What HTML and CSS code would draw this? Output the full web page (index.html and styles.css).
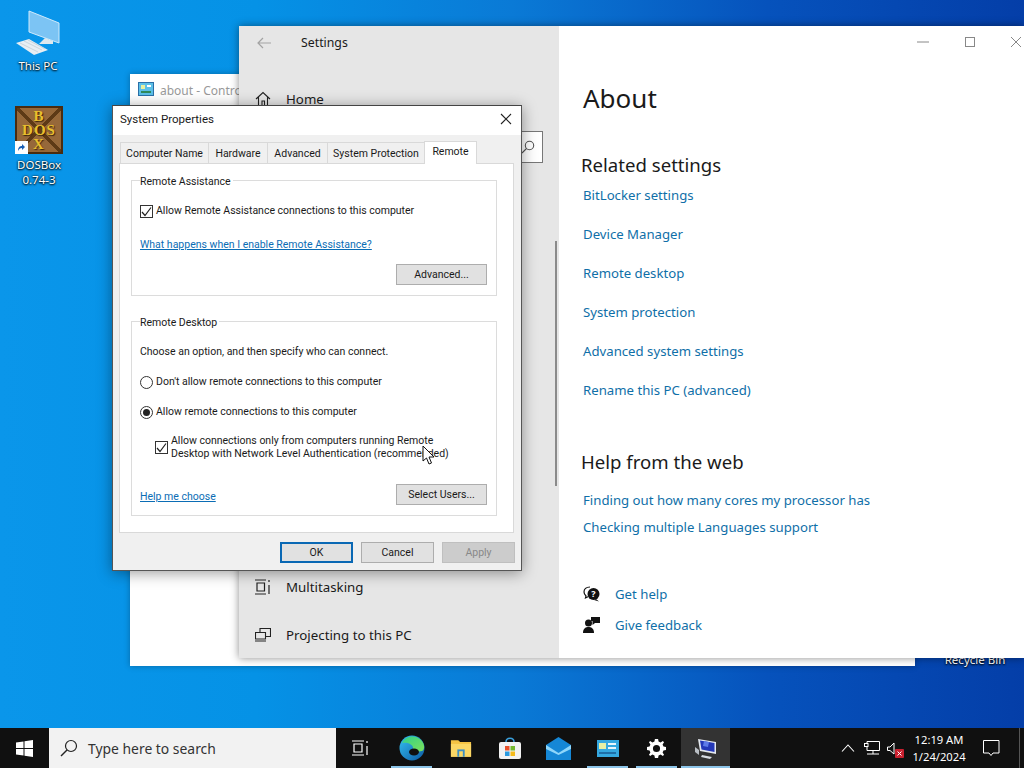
FILE: index.html
```html
<!DOCTYPE html>
<html lang="en">
<head>
    <meta charset="UTF-8">
    <title>System Properties</title>
    <link rel="stylesheet" href="styles.css">
</head>
<body>
    <div class="desktop">
        <!-- Desktop icons -->
        <div class="desk-icon this-pc">
            <svg width="46" height="46" viewBox="0 0 46 46">
                <path d="M14 1 L44 13 V33 L14 22 Z" fill="#7cc4f4" stroke="#cfeafc"/>
                <path d="M30 28 L38 31 V34 L24 34 Z" fill="#dfe8ee"/>
                <path d="M1 33 L14 29 L33 40 L19 45 Z" fill="#e8eef3"/>
                <path d="M5 33 L23 42 M9 31 L27 40 M13 30 L30 39" stroke="#b5c4ce" stroke-width="0.6"/>
            </svg>
            <span>This PC</span>
        </div>
        <div class="desk-icon dosbox">
            <div class="dos-tile">
                <span>B</span>
                <span>DOS</span>
                <span>X</span>
                <i class="shortcut">
                    <svg width="9" height="9" viewBox="0 0 9 9"><path d="M1 8 C1 4 3 3 5 3 V1 L8 4 L5 7 V5 C3 5 2 6 1 8 Z" fill="#1a5fb4"/></svg>
                </i>
            </div>
            <span>DOSBox<br>0.74-3</span>
        </div>
        <div class="desk-icon recycle"><span>Recycle Bin</span></div>

        <!-- Control panel window behind everything -->
        <div class="control-window">
            <svg width="16" height="14" viewBox="0 0 16 14"><rect x="0.5" y="0.5" width="15" height="13" fill="#5cc0e8" stroke="#2a6fa8"/><rect x="3" y="3" width="4" height="4" fill="#e8f0a0"/><rect x="9" y="3" width="4" height="2" fill="#fff"/><rect x="3" y="9" width="10" height="2" fill="#2f8a5c"/></svg>
            <span>about - Control Panel</span>
        </div>

        <!-- Settings window -->
        <div class="settings-window">
            <aside class="settings-nav">
                <div class="nav-title">
                    <svg width="16" height="14" viewBox="0 0 16 14"><path d="M15 7 H2 M7 2 L2 7 L7 12" fill="none" stroke="#a3a3a3" stroke-width="1.2"/></svg>
                    <span>Settings</span>
                </div>
                <div class="nav-item home">
                    <svg width="16" height="16" viewBox="0 0 16 16"><path d="M1 8 L8 1.5 L15 8 M3.5 6 V15 H7 V10 H9.5 V15 H12.5 V6" fill="none" stroke="#222" stroke-width="1.1"/></svg>
                    <span>Home</span>
                </div>
                <div class="nav-search">
                    <svg width="14" height="14" viewBox="0 0 14 14"><circle cx="8.5" cy="5.5" r="4.2" fill="none" stroke="#555" stroke-width="1.1"/><path d="M5.5 8.5 L1 13" stroke="#555" stroke-width="1.1"/></svg>
                </div>
                <div class="nav-scroll"></div>
                <div class="nav-item multitask">
                    <svg width="16" height="16" viewBox="0 0 16 16"><path d="M0 1 H11 M0 15 H11 M2 4 H9.500 V12 H2 Z M14 1 V3 M14 6 V15" fill="none" stroke="#222" stroke-width="1.2"/></svg>
                    <span>Multitasking</span>
                </div>
                <div class="nav-item">
                    <svg width="16" height="14" viewBox="0 0 16 14"><path d="M5 4 V0.500 H15.500 V8.500 H11 M0.500 4.500 H10.500 V11 H0.500 Z M0 13 H11" fill="none" stroke="#222" stroke-width="1.1"/></svg>
                    <span>Projecting to this PC</span>
                </div>
            </aside>
            <main class="settings-main">
                <div class="win-controls">
                    <svg width="14" height="14" viewBox="0 0 14 14"><path d="M1 7 H13" stroke="#888"/></svg>
                    <svg width="12" height="12" viewBox="0 0 12 12"><rect x="1.500" y="1.500" width="9" height="9" fill="none" stroke="#888"/></svg>
                    <svg width="12" height="12" viewBox="0 0 12 12"><path d="M1 1 L11 11 M11 1 L1 11" stroke="#888"/></svg>
                </div>
                <h1>About</h1>
                <h2 class="related">Related settings</h2>
                <ul class="link-list">
                    <li><a>BitLocker settings</a></li>
                    <li><a>Device Manager</a></li>
                    <li><a>Remote desktop</a></li>
                    <li><a>System protection</a></li>
                    <li><a>Advanced system settings</a></li>
                    <li><a>Rename this PC (advanced)</a></li>
                </ul>
                <h2 class="help-web">Help from the web</h2>
                <ul class="link-list tight">
                    <li><a>Finding out how many cores my processor has</a></li>
                    <li><a>Checking multiple Languages support</a></li>
                </ul>
                <div class="support">
                    <div class="support-row">
                        <svg width="17" height="16" viewBox="0 0 17 16"><path d="M7 1 C3 1 1 3 1 6 C1 8 2 9 3 10 L2.500 12 L5.500 10.500" fill="none" stroke="#111" stroke-width="1.200"/><circle cx="10.500" cy="8" r="6" fill="#111"/><path d="M13 13 L16 15.500 L11 14 Z" fill="#111"/><text x="10.500" y="11" class="help-mark">?</text></svg>
                        <a>Get help</a>
                    </div>
                    <div class="support-row">
                        <svg width="17" height="17" viewBox="0 0 17 17"><circle cx="5.500" cy="7" r="3.500" fill="#111"/><path d="M0 17 C0 12 3 11 5.500 11 C8 11 11 12 11 17 Z" fill="#111"/><path d="M8 1 H17 V7 H12 L9.500 9 V5 H8 Z" fill="#111"/></svg>
                        <a>Give feedback</a>
                    </div>
                </div>
            </main>
        </div>

        <!-- System Properties dialog -->
        <div class="dialog">
            <div class="dialog-title">
                <span>System Properties</span>
                <svg width="12" height="12" viewBox="0 0 12 12"><path d="M1 1 L11 11 M11 1 L1 11" stroke="#222" stroke-width="1.100"/></svg>
            </div>
            <div class="tabs">
                <div class="tab">Computer Name</div>
                <div class="tab">Hardware</div>
                <div class="tab">Advanced</div>
                <div class="tab">System Protection</div>
                <div class="tab active">Remote</div>
            </div>
            <div class="tab-panel">
                <fieldset class="group assist">
                    <legend>Remote Assistance</legend>
                    <label class="option">
                        <span class="check"><svg width="11" height="11" viewBox="0 0 11 11"><path d="M1 6 L4 9.500 L10 1.500" fill="none" stroke="#222" stroke-width="1.200"/></svg></span>
                        Allow Remote Assistance connections to this computer
                    </label>
                    <a class="dlg-link what">What happens when I enable Remote Assistance?</a>
                    <div class="btn-row"><button class="btn">Advanced...</button></div>
                </fieldset>
                <fieldset class="group desktop-group">
                    <legend>Remote Desktop</legend>
                    <p class="choose">Choose an option, and then specify who can connect.</p>
                    <label class="option radio-opt"><span class="radio"></span>Don't allow remote connections to this computer</label>
                    <label class="option radio-opt"><span class="radio on"></span>Allow remote connections to this computer</label>
                    <label class="option nla">
                        <span class="check"><svg width="11" height="11" viewBox="0 0 11 11"><path d="M1 6 L4 9.500 L10 1.500" fill="none" stroke="#222" stroke-width="1.200"/></svg></span>
                        <span>Allow connections only from computers running Remote<br>Desktop with Network Level Authentication (recommended)</span>
                    </label>
                    <div class="btn-row split">
                        <a class="dlg-link">Help me choose</a>
                        <button class="btn">Select Users...</button>
                    </div>
                </fieldset>
            </div>
            <div class="dialog-buttons">
                <button class="btn primary">OK</button>
                <button class="btn">Cancel</button>
                <button class="btn disabled">Apply</button>
            </div>
            <svg class="cursor" width="13" height="21" viewBox="0 0 13 21"><path d="M1 1 V16 L4.500 13 L7 19 L9.500 18 L7 12 L12 12 Z" fill="#fff" stroke="#111"/></svg>
        </div>

        <!-- Taskbar -->
        <footer class="taskbar">
            <div class="start">
                <svg width="17" height="17" viewBox="0 0 17 17"><path d="M0 2.500 L7.500 1.400 V8 H0 Z M8.500 1.300 L17 0 V8 H8.500 Z M0 9 H7.500 V15.600 L0 14.500 Z M8.500 9 H17 V17 L8.500 15.700 Z" fill="#fff"/></svg>
            </div>
            <div class="search-box">
                <svg width="18" height="18" viewBox="0 0 18 18"><circle cx="11" cy="7" r="5.500" fill="none" stroke="#222" stroke-width="1.200"/><path d="M7 11 L1 17" stroke="#222" stroke-width="1.400"/></svg>
                <span>Type here to search</span>
            </div>
            <div class="task-item task-view">
                <svg width="17" height="16" viewBox="0 0 17 16"><path d="M0 1 H12 M0 15 H12 M2 4 H10 V12 H2 Z M15 1 V3 M15 6 V15" fill="none" stroke="#fff" stroke-width="1.200"/></svg>
            </div>
            <div class="task-item running">
                <svg width="26" height="26" viewBox="0 0 26 26">
                    <defs>
                        <linearGradient id="edgeA" x1="0" y1="0" x2="1" y2="1"><stop offset="0" stop-color="#35c1f1"/><stop offset="1" stop-color="#0c59a4"/></linearGradient>
                        <linearGradient id="edgeB" x1="0" y1="0" x2="1" y2="1"><stop offset="0" stop-color="#2fd18a"/><stop offset="1" stop-color="#7ee05a"/></linearGradient>
                    </defs>
                    <circle cx="13" cy="13" r="12.500" fill="url(#edgeA)"/>
                    <path d="M3 8 C6 1 16 -1 22 5 C26 9 26 15 23 16 C19 17 14 16 14 13 C14 9 8 7 3 8 Z" fill="url(#edgeB)"/>
                    <ellipse cx="15" cy="17" rx="5" ry="3.500" fill="#101010"/>
                </svg>
            </div>
            <div class="task-item">
                <svg width="22" height="19" viewBox="0 0 24 20"><path d="M1 1 H9 L11 3 H23 V19 H1 Z" fill="#f5c344"/><path d="M1 5 H23 V19 H1 Z" fill="#fbd765"/><rect x="8" y="11" width="8" height="8" fill="#3d8fc4"/><rect x="10" y="13" width="4" height="6" fill="#fbd765"/></svg>
            </div>
            <div class="task-item">
                <svg width="24" height="24" viewBox="0 0 24 24"><path d="M8 6 C8 1 16 1 16 6" fill="none" stroke="#3aa0dc" stroke-width="1.500"/><rect x="1" y="6" width="22" height="17" rx="2" fill="#f2f2f2"/><rect x="7" y="10" width="4.500" height="4.500" fill="#e8502a"/><rect x="12.500" y="10" width="4.500" height="4.500" fill="#74b82e"/><rect x="7" y="15.500" width="4.500" height="4.500" fill="#2a9ae0"/><rect x="12.500" y="15.500" width="4.500" height="4.500" fill="#f5bb1c"/></svg>
            </div>
            <div class="task-item">
                <svg width="25" height="23" viewBox="0 0 25 23"><path d="M0 8 L12.500 0 L25 8 V23 H0 Z" fill="#1587d6"/><path d="M0 8 L12.500 16 L25 8 V12 L12.500 18 L0 12 Z" fill="#8fd6fa"/></svg>
            </div>
            <div class="task-item running">
                <svg width="22" height="17" viewBox="0 0 22 17"><rect width="22" height="17" fill="#35a8e0"/><rect x="2" y="3" width="7" height="6" fill="#e6f0a6"/><rect x="11" y="3" width="8" height="2" fill="#eaf6fc"/><rect x="11" y="7" width="8" height="2" fill="#eaf6fc"/><rect x="2" y="12" width="17" height="2" fill="#1e6fa8"/></svg>
            </div>
            <div class="task-item running">
                <svg width="19" height="19" viewBox="0 0 24 24"><path fill="#fff" fill-rule="evenodd" d="M10 0 H14 L14.600 3.200 L17.200 4.300 L20 2.500 L21.500 4 L19.700 6.800 L20.800 9.400 L24 10 V14 L20.800 14.600 L19.700 17.200 L21.500 20 L20 21.500 L17.200 19.700 L14.600 20.800 L14 24 H10 L9.400 20.800 L6.800 19.700 L4 21.500 L2.500 20 L4.300 17.200 L3.200 14.600 L0 14 V10 L3.200 9.400 L4.300 6.800 L2.500 4 L4 2.500 L6.800 4.300 L9.400 3.200 Z M12 7.500 A4.500 4.500 0 1 0 12 16.500 A4.500 4.500 0 1 0 12 7.500 Z"/></svg>
            </div>
            <div class="task-item running current">
                <svg width="24" height="24" viewBox="0 0 24 24"><path d="M1 11 L5 14 V19 L1 16 Z" fill="#b9bec4"/><path d="M4 3 L22 6 V18 L6 15 Z" fill="#e4e8ee"/><path d="M6 4.500 L20.500 7 V16 L7.500 13.600 Z" fill="#2438b8"/><path d="M10 5 L15 6 L14 11 L9 10 Z" fill="#5d7ae8"/><path d="M8 19 L18 21 L16 23 L7 21 Z" fill="#d8dce2"/></svg>
            </div>
            <div class="tray">
                <svg width="14" height="8" viewBox="0 0 14 8"><path d="M1 7.500 L7 1 L13 7.500" fill="none" stroke="#fff" stroke-width="1.100"/></svg>
                <svg class="tray-net" width="16" height="14" viewBox="0 0 16 14"><path d="M3 3 V0.500 H15.500 V9.500 H3 V5.500 M9 9.500 V13 M3 13 H15" fill="none" stroke="#fff"/><rect x="0.500" y="2.500" width="3.500" height="3" fill="none" stroke="#fff"/></svg>
                <svg class="tray-vol" width="18" height="16" viewBox="0 0 18 16"><path d="M0.500 5 H3 L7 1 V12 L3 8.500 H0.500 Z" fill="none" stroke="#fff"/><rect x="8" y="7" width="9" height="9" rx="1" fill="#c8202f"/><path d="M10.500 9.500 L14.500 13.500 M14.500 9.500 L10.500 13.500" stroke="#fff"/></svg>
                <div class="clock"><span>12:19 AM</span><span>1/24/2024</span></div>
                <svg class="tray-note" width="17" height="17" viewBox="0 0 17 17"><path d="M0.500 0.500 H16 V13 H10 L8 15.500 L6 13 H0.500 Z" fill="none" stroke="#fff"/></svg>
                <div class="show-desktop"></div>
            </div>
        </footer>
    </div>
</body>
</html>
```

FILE: styles.css
```css
* {
    box-sizing: border-box;
}
html, body {
    margin: 0;
    height: 100%;
}
body {
    font-family: "Noto Sans", "Open Sans", sans-serif;
    overflow: hidden;
}
.desktop {
    position: relative;
    width: 1024px;
    height: 768px;
    overflow: hidden;
    background: linear-gradient(90deg, #0a96ea 0%, #0592e6 25%, #0a7ad6 50%, #0652bc 75%, #043ea8 100%);
}

/* desktop icons */
.desk-icon {
    position: absolute;
    display: flex;
    flex-direction: column;
    align-items: center;
    color: #fff;
    font-size: 11.5px;
    line-height: 15px;
    text-align: center;
    text-shadow: 0 1px 2px #000, 0 0 2px #000;
}
.this-pc {
    left: 8px;
    top: 10px;
    width: 60px;
}
.this-pc span {
    margin-top: 2px;
}
.dosbox {
    left: 9px;
    top: 106px;
    width: 60px;
}
.dosbox > span {
    margin-top: 3px;
}
.dos-tile {
    position: relative;
    width: 48px;
    height: 48px;
    display: flex;
    flex-direction: column;
    align-items: center;
    justify-content: center;
    background:
        linear-gradient(45deg, transparent 47%, #5e3a16 47%, #5e3a16 53%, transparent 53%),
        linear-gradient(-45deg, transparent 47%, #5e3a16 47%, #5e3a16 53%, transparent 53%),
        #96683a;
    border: 2px solid #4a2c10;
    color: #e8bf2e;
    font-family: "Liberation Serif", serif;
    font-weight: bold;
    font-size: 15px;
    line-height: 14px;
    letter-spacing: 1px;
    text-shadow: 1px 1px 1px #3a2408;
}
.shortcut {
    position: absolute;
    left: -2px;
    bottom: -2px;
    width: 13px;
    height: 13px;
    background: #fff;
    display: flex;
    align-items: center;
    justify-content: center;
}
.recycle {
    left: 940px;
    top: 652px;
    width: 70px;
}

/* windows */
.control-window {
    position: absolute;
    left: 130px;
    top: 74px;
    width: 785px;
    height: 592px;
    background: #fff;
    box-shadow: 0 0 6px rgba(0, 0, 0, 0.3);
    display: flex;
    align-items: flex-start;
    gap: 6px;
    padding: 8px;
    font-size: 12px;
    color: #999;
}
.settings-window {
    position: absolute;
    left: 239px;
    top: 26px;
    width: 785px;
    height: 632px;
    display: flex;
    background: #fff;
    box-shadow: 0 0 8px rgba(0, 0, 0, 0.45);
    color: #1a1a1a;
}
.settings-nav {
    position: relative;
    width: 320px;
    background: #e6e6e6;
    font-size: 13.300px;
}
.nav-title {
    display: flex;
    align-items: center;
    gap: 29px;
    height: 33px;
    padding-left: 17px;
    font-size: 12.300px;
}
.nav-item {
    display: flex;
    align-items: center;
    gap: 15px;
    height: 48px;
    padding-left: 16px;
}
.home {
    margin-top: 16px;
}
.multitask {
    margin-top: 440px;
}
.nav-search {
    position: absolute;
    left: 20px;
    top: 105px;
    width: 284px;
    height: 32px;
    background: #fff;
    border: 1px solid #777;
    display: flex;
    align-items: center;
    justify-content: flex-end;
    padding-right: 7px;
}
.nav-scroll {
    position: absolute;
    right: 2px;
    top: 215px;
    width: 2px;
    height: 245px;
    background: #8a8a8a;
}
.settings-main {
    position: relative;
    flex: 1;
    padding: 49px 0 0 24px;
}
.win-controls {
    position: absolute;
    top: 9px;
    right: 2px;
    display: flex;
    align-items: center;
    gap: 34px;
}
.settings-main h1 {
    margin: 0;
    font-size: 26px;
    font-weight: 400;
    line-height: 46px;
}
.settings-main h2 {
    margin: 0 0 0 -2px;
    font-size: 18.600px;
    font-weight: 400;
    line-height: 28px;
}
.related {
    margin-top: 30px !important;
}
.help-web {
    margin-top: 30px !important;
}
.link-list {
    list-style: none;
    margin: 5px 0 0;
    padding: 0;
    font-size: 13.200px;
}
.link-list li {
    height: 39px;
    line-height: 22px;
}
.link-list.tight {
    margin-top: 13px;
}
.link-list.tight li {
    height: 27px;
}
.settings-main a {
    color: #0f6fa8;
}
.support {
    margin-top: 35px;
    font-size: 13.200px;
}
.support-row {
    display: flex;
    align-items: center;
    gap: 15px;
    height: 31px;
}
.help-mark {
    fill: #fff;
    font-size: 9px;
    font-weight: bold;
    text-anchor: middle;
}

/* system properties */
.dialog {
    position: absolute;
    left: 112px;
    top: 105px;
    width: 410px;
    height: 466px;
    background: #f0f0f0;
    border: 1px solid #555;
    border-top-color: #444;
    box-shadow: 0 2px 14px rgba(0, 0, 0, 0.4);
    display: flex;
    flex-direction: column;
    font-family: Roboto, "Noto Sans", sans-serif;
    font-size: 10.500px;
    color: #1a1a1a;
}
.dialog-title {
    height: 29px;
    flex: none;
    background: #fff;
    display: flex;
    align-items: center;
    justify-content: space-between;
    padding: 0 9px 3px 7px;
    font-size: 11.500px;
}
.tabs {
    display: grid;
    grid-template-columns: 88px 59px 60px 97px 52px;
    align-items: end;
    height: 28px;
    padding-left: 7px;
    flex: none;
}
.tab {
    height: 21px;
    line-height: 21px;
    text-align: center;
    background: #f0f0f0;
    border: 1px solid #d9d9d9;
    border-bottom: 0;
    margin-right: -1px;
    white-space: nowrap;
}
.tab.active {
    height: 23px;
    line-height: 19px;
    background: #fff;
    position: relative;
    margin-bottom: -1px;
}
.tab-panel {
    width: 395px;
    height: 370px;
    margin-left: 6px;
    background: #fff;
    border: 1px solid #d9d9d9;
    padding: 7px 16px 0 11px;
    flex: none;
}
.group {
    margin: 0;
    padding: 0 9px 0 8px;
    border: 1px solid #dcdcdc;
    min-width: 0;
}
.group legend {
    padding: 4px 2px 0 0;
    line-height: 14px;
}
.assist {
    height: 125px;
}
.desktop-group {
    height: 204px;
    margin-top: 16px;
}
.option {
    display: flex;
    align-items: center;
    gap: 3px;
    line-height: 14px;
}
.assist .option {
    margin-top: 15px;
}
.check {
    flex: none;
    width: 13px;
    height: 13px;
    border: 1px solid #333;
    background: #fff;
    display: flex;
    align-items: center;
    justify-content: center;
}
.radio {
    flex: none;
    width: 13px;
    height: 13px;
    border: 1px solid #333;
    border-radius: 50%;
    background: #fff;
    position: relative;
}
.radio.on::after {
    content: "";
    position: absolute;
    left: 2px;
    top: 2px;
    width: 7px;
    height: 7px;
    border-radius: 50%;
    background: #222;
}
.dlg-link {
    color: #0b6db5;
    text-decoration: underline;
}
.what {
    display: block;
    margin-top: 20px;
    line-height: 14px;
}
.btn {
    width: 91px;
    height: 21px;
    padding: 0;
    font: inherit;
    color: #1a1a1a;
    background: #e1e1e1;
    border: 1px solid #adadad;
}
.btn-row {
    display: flex;
    justify-content: flex-end;
}
.assist .btn-row {
    margin-top: 12px;
}
.split {
    justify-content: space-between;
    align-items: center;
    margin-top: 24px;
}
.split .dlg-link {
    padding-top: 3px;
}
.choose {
    margin: 15px 0 1px;
    line-height: 14px;
}
.radio-opt {
    margin-top: 16px;
}
.nla {
    margin: 15px 0 0 15px;
    line-height: 13px;
}
.dialog-buttons {
    flex: 1;
    display: flex;
    justify-content: flex-end;
    gap: 8px;
    padding: 9px 6px 0 0;
}
.dialog-buttons .btn {
    width: 73px;
}
.btn.primary {
    border: 2px solid #0a68b4;
    background: #e1e1e1;
}
.btn.disabled {
    background: #ccc;
    border-color: #bfbfbf;
    color: #888;
}
.cursor {
    position: absolute;
    left: 309px;
    top: 339px;
}

/* taskbar */
.taskbar {
    position: absolute;
    left: 0;
    right: 0;
    bottom: 0;
    height: 40px;
    background: #101010;
    display: flex;
    color: #fff;
}
.taskbar > * {
    flex: none;
}
.start {
    width: 49px;
    display: flex;
    align-items: center;
    justify-content: center;
}
.search-box {
    width: 287px;
    background: #f2f2f2;
    display: flex;
    align-items: center;
    gap: 10px;
    padding-left: 11px;
    color: #333;
    font-size: 13.900px;
}
.task-item {
    position: relative;
    width: 49px;
    display: flex;
    align-items: center;
    justify-content: center;
}
.task-item.task-view {
    width: 51px;
    padding-right: 3px;
}
.task-item.running::after {
    content: "";
    position: absolute;
    left: 4px;
    right: 4px;
    bottom: 0;
    height: 2px;
    background: #8cc4e8;
}
.task-item.current {
    background: #333;
}
.task-item.current::after {
    left: 0;
    right: 0;
}
.tray {
    width: 294px;
    display: flex;
    align-items: center;
    padding-left: 111px;
}
.tray svg {
    flex: none;
}
.tray-net {
    margin-left: 9px;
}
.tray-vol {
    margin-left: 7px;
    margin-top: 4px;
}
.clock {
    flex: none;
    display: flex;
    flex-direction: column;
    align-items: center;
    width: 62px;
    margin-left: 3px;
    font-size: 11.200px;
    line-height: 17px;
}
.tray-note {
    margin-left: 13px;
}
.show-desktop {
    flex: none;
    width: 1px;
    height: 40px;
    margin-left: 19px;
    background: #555;
}
```
